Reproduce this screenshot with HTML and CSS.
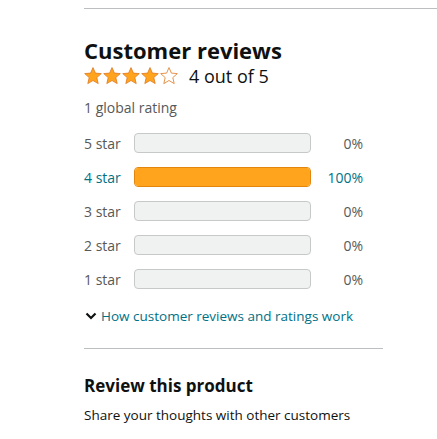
FILE: index.html
```html
<!DOCTYPE html>
<html>
<head>
<meta charset="utf-8">
<link rel="stylesheet" href="styles.css">
</head>
<body>
<div class="page">
  <hr class="rule-top">
  <section class="reviews">
    <h2 class="title">Customer reviews</h2>
    <div class="avg">
      <span class="stars">
        <svg width="96" height="18" viewBox="0 0 96 18">
          <defs>
            <path id="st" d="M9 0.6 L11.4 6.1 L17.3 6.6 L12.8 10.6 L14.2 16.6 L9 13.5 L3.8 16.6 L5.2 10.6 L0.7 6.6 L6.6 6.1 Z"/>
          </defs>
          <use href="#st" x="0" fill="#ffa41c" stroke="#de7921" stroke-width="0.8"/>
          <use href="#st" x="19" fill="#ffa41c" stroke="#de7921" stroke-width="0.8"/>
          <use href="#st" x="38" fill="#ffa41c" stroke="#de7921" stroke-width="0.8"/>
          <use href="#st" x="57" fill="#ffa41c" stroke="#de7921" stroke-width="0.8"/>
          <use href="#st" x="76" fill="#fff" stroke="#de7921" stroke-width="0.8"/>
        </svg>
      </span>
      <span class="avg-text">4 out of 5</span>
    </div>
    <div class="count">1 global rating</div>
    <div class="hist">
      <div class="row"><span class="lbl">5 star</span><span class="bar"><span class="fill" style="width:0%"></span></span><span class="pct">0%</span></div>
      <div class="row on"><span class="lbl">4 star</span><span class="bar"><span class="fill" style="width:100%"></span></span><span class="pct">100%</span></div>
      <div class="row"><span class="lbl">3 star</span><span class="bar"><span class="fill" style="width:0%"></span></span><span class="pct">0%</span></div>
      <div class="row"><span class="lbl">2 star</span><span class="bar"><span class="fill" style="width:0%"></span></span><span class="pct">0%</span></div>
      <div class="row"><span class="lbl">1 star</span><span class="bar"><span class="fill" style="width:0%"></span></span><span class="pct">0%</span></div>
    </div>
    <a class="how" href="#">
      <svg width="12" height="8" viewBox="0 0 12 8"><path d="M1.5 1.5 L6 6 L10.5 1.5" fill="none" stroke="#0f1111" stroke-width="2.2"/></svg>
      <span>How customer reviews and ratings work</span>
    </a>
    <hr class="rule-mid">
    <h3 class="sub">Review this product</h3>
    <p class="share">Share your thoughts with other customers</p>
  </section>
</div>
</body>
</html>
```

FILE: styles.css
```css
html, body {
  margin: 0;
  padding: 0;
  background: #fff;
}
body {
  font-family: "Open Sans", "Noto Sans", sans-serif;
  color: #0f1111;
}
.page {
  padding-left: 84px;
  padding-top: 8px;
}
.rule-top {
  margin: 0;
  border: 0;
  border-top: 1px solid #bbbfbf;
}
.reviews {
  width: 299px;
}
.title {
  margin: 27px 0 0;
  font-size: 22px;
  font-weight: 700;
  line-height: 28px;
}
.avg {
  display: flex;
  align-items: center;
  height: 24px;
}
.stars {
  display: flex;
  width: 105px;
}
.avg-text {
  font-size: 18px;
  line-height: 24px;
}
.count {
  margin-top: 10px;
  font-size: 14px;
  line-height: 20px;
  color: #565959;
}
.hist {
  margin-top: 8px;
}
.row {
  display: flex;
  align-items: center;
  height: 34px;
  font-size: 14px;
  color: #565959;
}
.row.on {
  color: #007185;
}
.lbl {
  width: 50px;
}
.bar {
  width: 177px;
  height: 20px;
  box-sizing: border-box;
  border: 1px solid #c7c9c9;
  border-radius: 4px;
  background: #f0f2f2;
  overflow: hidden;
  display: flex;
}
.row.on .bar {
  border-color: #e3860f;
}
.fill {
  display: block;
  height: 100%;
  background: #ffa41c;
}
.pct {
  width: 52px;
  text-align: right;
}
.how {
  display: flex;
  align-items: center;
  gap: 4px;
  margin-top: 10px;
  font-size: 13.5px;
  line-height: 20px;
  color: #007185;
  text-decoration: none;
  padding-left: 1px;
}
.rule-mid {
  margin: 22px 0 0;
  border: 0;
  border-top: 1px solid #bbbfbf;
}
.sub {
  margin: 25px 0 0;
  font-size: 17px;
  font-weight: 700;
  line-height: 24px;
}
.share {
  margin: 7px 0 0;
  font-size: 13.5px;
  line-height: 20px;
}
```
